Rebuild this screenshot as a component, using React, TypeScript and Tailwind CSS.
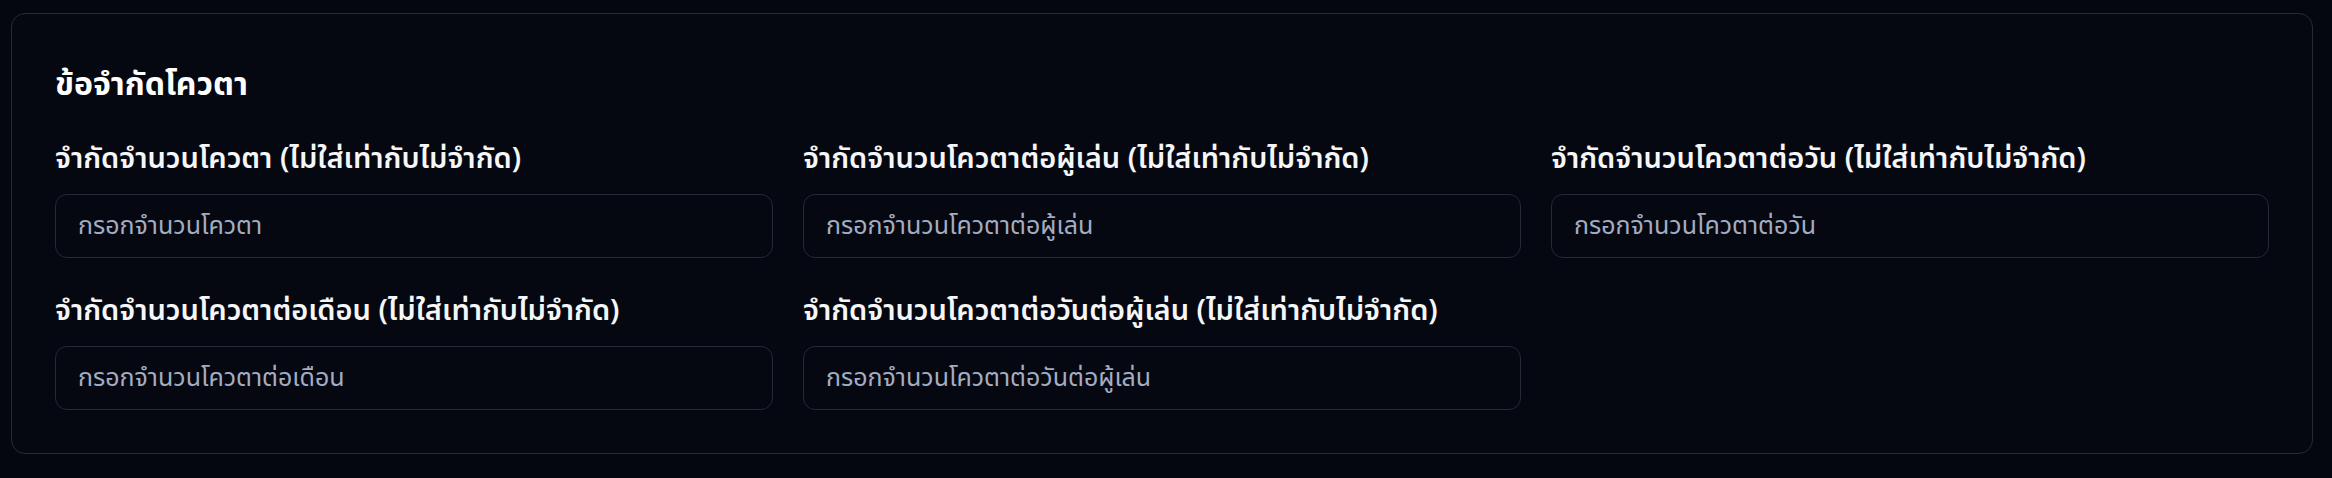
import React from 'react';

interface QuotaField {
  key: string;
  label: string;
  placeholder: string;
}

const fields: QuotaField[] = [
  { key: 'total', label: 'จำกัดจำนวนโควตา (ไม่ใส่เท่ากับไม่จำกัด)', placeholder: 'กรอกจำนวนโควตา' },
  { key: 'perPlayer', label: 'จำกัดจำนวนโควตาต่อผู้เล่น (ไม่ใส่เท่ากับไม่จำกัด)', placeholder: 'กรอกจำนวนโควตาต่อผู้เล่น' },
  { key: 'perDay', label: 'จำกัดจำนวนโควตาต่อวัน (ไม่ใส่เท่ากับไม่จำกัด)', placeholder: 'กรอกจำนวนโควตาต่อวัน' },
  { key: 'perMonth', label: 'จำกัดจำนวนโควตาต่อเดือน (ไม่ใส่เท่ากับไม่จำกัด)', placeholder: 'กรอกจำนวนโควตาต่อเดือน' },
  { key: 'perDayPerPlayer', label: 'จำกัดจำนวนโควตาต่อวันต่อผู้เล่น (ไม่ใส่เท่ากับไม่จำกัด)', placeholder: 'กรอกจำนวนโควตาต่อวันต่อผู้เล่น' },
];

export default function App() {
  return (
    <div className="min-h-[478px] bg-[#05070f] pl-[11px] pr-[19px] pt-[13px] pb-[25px] font-['Noto_Sans_Thai','Noto_Sans',sans-serif]">
      <div className="rounded-[14px] border border-[#252a39] bg-[#060811] px-[43px] pt-[51px] pb-[43px]">
        <h2 className="text-[32px] font-bold leading-[40px] text-white">ข้อจำกัดโควตา</h2>
        <div className="mt-[36px] grid grid-cols-3 gap-x-[30px] gap-y-[35px]">
          {fields.map(f => (
            <div key={f.key} className="flex flex-col gap-[17px]">
              <label className="text-[29px] font-semibold leading-[36px] text-[#f5f6f8]">{f.label}</label>
              <input
                type="text"
                placeholder={f.placeholder}
                className="h-[64px] w-full rounded-xl border border-[#252a39] bg-[#060811] px-[22px] text-[25px] text-white placeholder:text-[#a3adc2] focus:outline-none"
              />
            </div>
          ))}
        </div>
      </div>
    </div>
  );
}
